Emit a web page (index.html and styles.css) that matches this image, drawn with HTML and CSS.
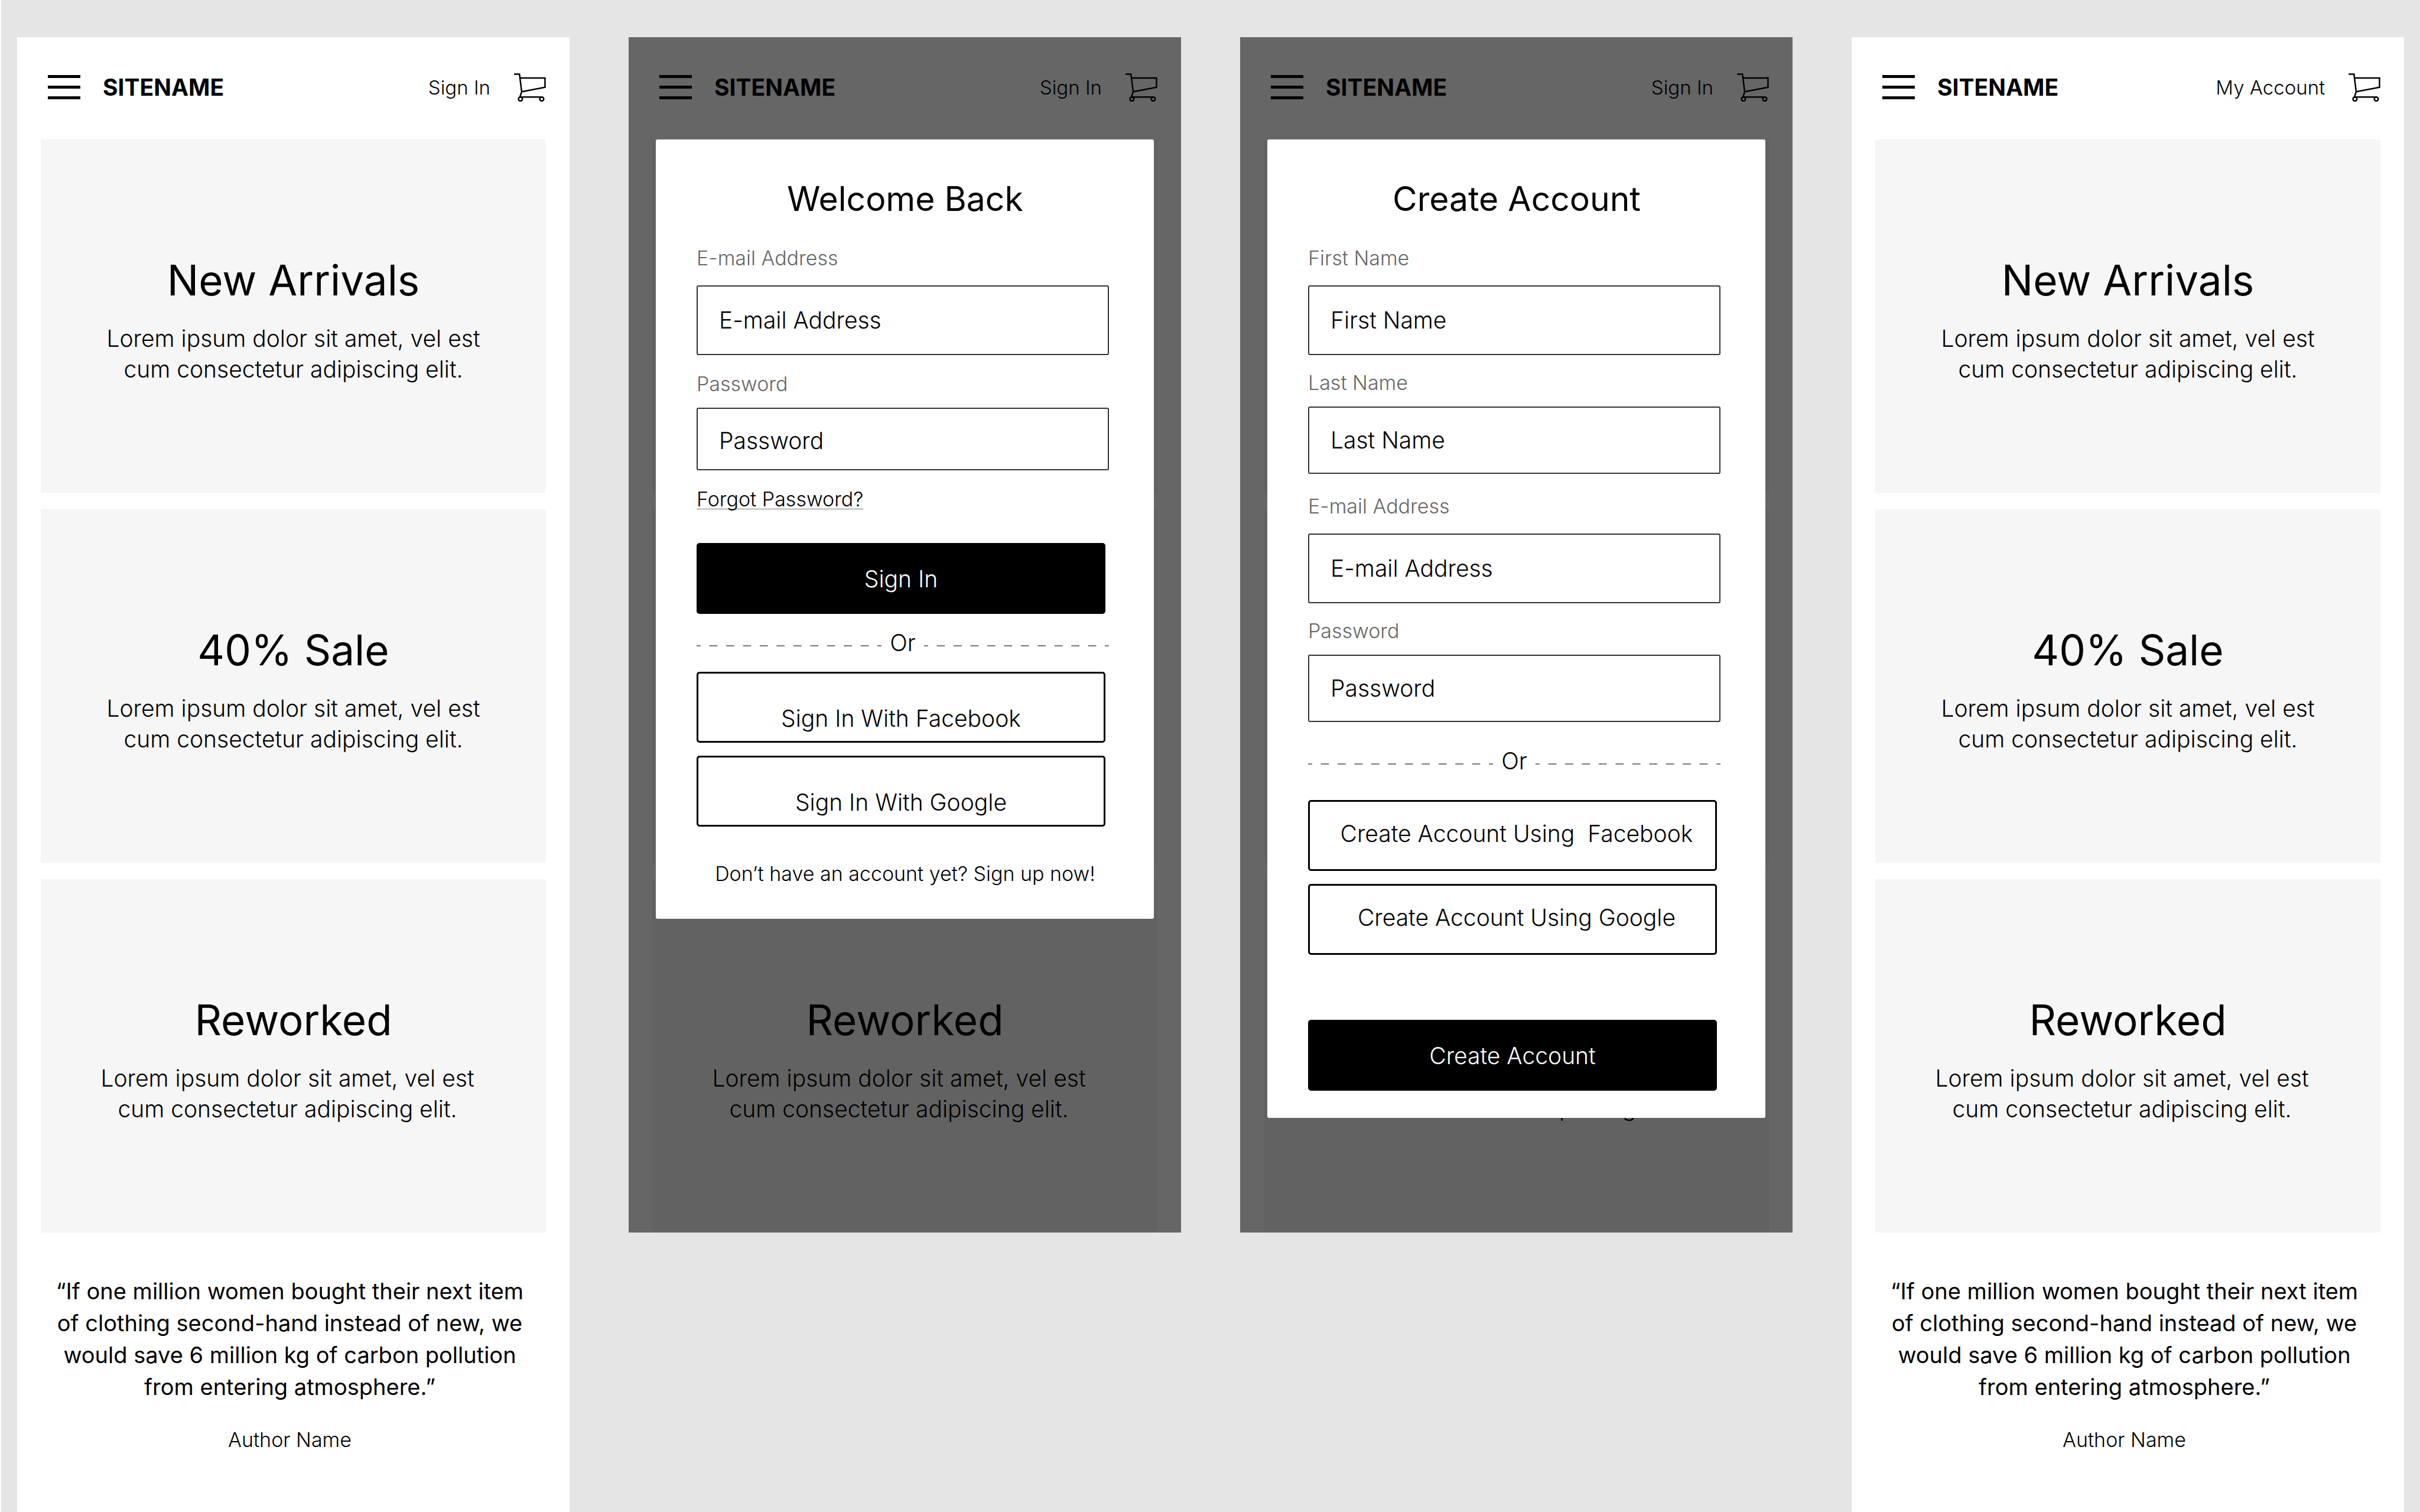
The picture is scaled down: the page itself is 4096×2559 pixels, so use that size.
FILE: index.html
```html
<!DOCTYPE html>
<html lang="en">
<head>
<meta charset="utf-8">
<title>Sitename – sign in flow</title>
<link rel="stylesheet" href="styles.css">
</head>
<body>
<svg class="sprite" aria-hidden="true">
  <symbol id="menu" viewBox="0 0 55 41">
    <path d="M0 2.5H55M0 20.5H55M0 38.5H55" stroke="#000" stroke-width="5"/>
  </symbol>
  <symbol id="cart" viewBox="0 0 56 50">
    <g fill="none" stroke="#000" stroke-width="2.6">
      <path d="M0 1.6H9.5L13.4 32.6L54.5 24.6V8.4H10.4M13.4 32.6L10.2 42H49"/>
      <circle cx="11.2" cy="45.4" r="3.5"/>
      <circle cx="48.8" cy="45.4" r="3.5"/>
    </g>
  </symbol>
</svg>
<div class="board">

  <section class="screen">
    <header class="topbar">
      <button class="icon-button" aria-label="Menu"><svg class="menu-icon"><use href="#menu"/></svg></button>
      <a class="brand" href="#">SITENAME</a>
      <a class="account" href="#">Sign In</a>
      <button class="icon-button" aria-label="Cart"><svg class="cart-icon"><use href="#cart"/></svg></button>
    </header>
    <main class="cards">
      <article class="card"><h2>New Arrivals</h2><p>Lorem ipsum dolor sit amet, vel est<br>cum consectetur adipiscing elit.</p></article>
      <article class="card"><h2>40% Sale</h2><p>Lorem ipsum dolor sit amet, vel est<br>cum consectetur adipiscing elit.</p></article>
      <article class="card card-shifted"><h2>Reworked</h2><p>Lorem ipsum dolor sit amet, vel est<br>cum consectetur adipiscing elit.</p></article>
    </main>
    <figure class="quote">
      <blockquote>“If one million women bought their next item<br>of clothing second-hand instead of new, we<br>would save 6 million kg of carbon pollution<br>from entering atmosphere.”</blockquote>
      <figcaption>Author Name</figcaption>
    </figure>
  </section>

  <section class="screen screen-short">
    <header class="topbar">
      <button class="icon-button" aria-label="Menu"><svg class="menu-icon"><use href="#menu"/></svg></button>
      <a class="brand" href="#">SITENAME</a>
      <a class="account" href="#">Sign In</a>
      <button class="icon-button" aria-label="Cart"><svg class="cart-icon"><use href="#cart"/></svg></button>
    </header>
    <main class="cards">
      <article class="card"></article>
      <article class="card"></article>
      <article class="card card-shifted"><h2>Reworked</h2><p>Lorem ipsum dolor sit amet, vel est<br>cum consectetur adipiscing elit.</p></article>
    </main>
    <div class="overlay">
      <form class="modal modal-signin">
        <h1>Welcome Back</h1>
        <div class="field">
          <label for="in-email">E-mail Address</label>
          <input id="in-email" type="email" placeholder="E-mail Address">
        </div>
        <div class="field field-tight field-low">
          <label for="in-pass">Password</label>
          <input id="in-pass" type="password" placeholder="Password">
        </div>
        <a class="forgot" href="#">Forgot Password?</a>
        <button class="button button-solid" type="submit">Sign In</button>
        <div class="divider"><span>Or</span></div>
        <div class="social">
          <button class="button" type="button">Sign In With Facebook</button>
          <button class="button" type="button">Sign In With Google</button>
        </div>
        <a class="signup" href="#">Don’t have an account yet? Sign up now!</a>
      </form>
    </div>
  </section>

  <section class="screen screen-short">
    <header class="topbar">
      <button class="icon-button" aria-label="Menu"><svg class="menu-icon"><use href="#menu"/></svg></button>
      <a class="brand" href="#">SITENAME</a>
      <a class="account" href="#">Sign In</a>
      <button class="icon-button" aria-label="Cart"><svg class="cart-icon"><use href="#cart"/></svg></button>
    </header>
    <main class="cards">
      <article class="card"></article>
      <article class="card"></article>
      <article class="card card-shifted card-covered"><p>cum consectetur adipiscing elit.</p></article>
    </main>
    <div class="overlay">
      <form class="modal modal-create">
        <h1>Create Account</h1>
        <div class="field">
          <label for="new-first">First Name</label>
          <input id="new-first" type="text" placeholder="First Name">
        </div>
        <div class="field field-tight">
          <label for="new-last">Last Name</label>
          <input id="new-last" type="text" placeholder="Last Name">
        </div>
        <div class="field field-apart">
          <label for="new-email">E-mail Address</label>
          <input id="new-email" type="email" placeholder="E-mail Address">
        </div>
        <div class="field field-tight">
          <label for="new-pass">Password</label>
          <input id="new-pass" type="password" placeholder="Password">
        </div>
        <div class="divider"><span>Or</span></div>
        <div class="social">
          <button class="button" type="button">Create Account Using&nbsp; Facebook</button>
          <button class="button" type="button">Create Account Using Google</button>
        </div>
        <button class="button button-solid" type="submit">Create Account</button>
      </form>
    </div>
  </section>

  <section class="screen">
    <header class="topbar">
      <button class="icon-button" aria-label="Menu"><svg class="menu-icon"><use href="#menu"/></svg></button>
      <a class="brand" href="#">SITENAME</a>
      <a class="account" href="#">My Account</a>
      <button class="icon-button" aria-label="Cart"><svg class="cart-icon"><use href="#cart"/></svg></button>
    </header>
    <main class="cards">
      <article class="card"><h2>New Arrivals</h2><p>Lorem ipsum dolor sit amet, vel est<br>cum consectetur adipiscing elit.</p></article>
      <article class="card"><h2>40% Sale</h2><p>Lorem ipsum dolor sit amet, vel est<br>cum consectetur adipiscing elit.</p></article>
      <article class="card card-shifted"><h2>Reworked</h2><p>Lorem ipsum dolor sit amet, vel est<br>cum consectetur adipiscing elit.</p></article>
    </main>
    <figure class="quote">
      <blockquote>“If one million women bought their next item<br>of clothing second-hand instead of new, we<br>would save 6 million kg of carbon pollution<br>from entering atmosphere.”</blockquote>
      <figcaption>Author Name</figcaption>
    </figure>
  </section>

</div>
</body>
</html>
```
FILE: styles.css
```css
* { box-sizing: border-box; }

body {
  margin: 0;
  background: #e5e5e5;
  color: #000;
  font-family: Inter, "Open Sans", sans-serif;
  font-size: 39px;
  font-weight: 300;
}

h1, h2, p, figure, blockquote { margin: 0; }
h1, h2 { font-weight: 400; }
a { color: inherit; text-decoration: none; }
button, input { font: inherit; color: inherit; }

.sprite { display: none; }

.board {
  display: flex;
  gap: 100px;
  min-height: 100vh;
  padding: 63px 27px 0;
  border-left: 2px solid #fff;
}

.screen {
  position: relative;
  flex: 1;
  min-width: 0;
  background: #fff;
}
.screen-short { align-self: flex-start; }

/* Top bar */
.topbar {
  display: flex;
  align-items: center;
  height: 169px;
  padding: 0 40px 0 52px;
}
.icon-button {
  display: flex;
  padding: 0;
  border: 0;
  background: none;
}
.menu-icon { width: 55px; height: 41px; }
.cart-icon { width: 54px; height: 48px; }
.brand {
  margin: 0 auto 0 38px;
  font-weight: 700;
}
.account {
  margin-right: 40px;
  font-size: 33px;
}

/* Promo cards */
.cards {
  display: grid;
  gap: 28px;
  padding: 4px 40px 0;
}
.card {
  min-height: 598px;
  padding-top: 198px;
  background: #f6f6f6;
  text-align: center;
}
.card h2 {
  margin-bottom: 33px;
  font-size: 71px;
  line-height: 80px;
}
.card p { line-height: 52px; }
.card-shifted p { padding-right: 20px; }
.card-covered { padding-top: 361px; }

/* Testimonial */
.quote {
  padding: 72px 12px 0 0;
  text-align: center;
}
.quote blockquote {
  font-weight: 400;
  font-size: 38px;
  line-height: 54px;
}
.quote figcaption {
  margin-top: 42px;
  font-size: 34px;
  line-height: 42px;
}

/* Dialogs */
.overlay {
  position: absolute;
  inset: 0;
  padding: 173px 46px 0;
  background: rgba(0, 0, 0, 0.6);
}
.modal {
  display: flex;
  flex-direction: column;
  padding: 67px 76px 46px 69px;
  border-radius: 3px;
  background: #fff;
}
.modal-signin { padding-bottom: 56px; }
.modal h1 {
  margin: 0 -4px 46px 4px;
  font-size: 57px;
  line-height: 68px;
  text-align: center;
}

.field {
  display: grid;
  gap: 26px;
  margin-bottom: 29px;
}
.field-tight { gap: 20px; }
.field label {
  color: #666;
  font-size: 34px;
  line-height: 40px;
}
.field input {
  width: 100%;
  height: 118px;
  padding: 0 36px 2px;
  border: 2px solid #333;
  border-radius: 3px;
  background: #fff;
  font-size: 39px;
}
.field input::placeholder { color: #000; opacity: 1; }
.field-tight input { height: 114px; }
.field-low input { height: 106px; padding-top: 6px; }

.forgot {
  align-self: flex-start;
  margin-bottom: 54px;
  font-size: 34px;
  line-height: 40px;
  text-decoration: underline 1px #777;
  text-decoration-skip-ink: none;
  text-underline-offset: 4px;
}

.button {
  height: 120px;
  margin-right: 6px;
  padding: 0;
  border: 3px solid #000;
  border-radius: 5px;
  background: #fff;
  font-size: 39px;
}
.button-solid {
  background: #000;
  color: #fff;
}

.divider {
  display: flex;
  align-items: center;
  gap: 14px;
  margin: 26px 0;
  font-size: 39px;
  line-height: 46px;
}
.divider::before,
.divider::after {
  content: "";
  flex: 1;
  height: 2px;
  margin-top: 10px;
  background: linear-gradient(90deg, #777 25%, transparent 25% 75%, #777 75%) 0 0 / 28px 2px round;
}

.social { display: grid; gap: 22px; }
.modal-signin .social .button { padding-top: 36px; }

.modal-create .field { margin-bottom: 27px; }
.modal-create .field-apart { margin-top: 8px; }
.modal-create .divider { margin: 16px 0 43px; }
.modal-create .social { margin-bottom: 110px; }
.modal-create .social .button { padding: 0 0 8px 14px; }

.signup {
  margin: 60px -4px 0 4px;
  font-size: 34px;
  line-height: 40px;
  text-align: center;
}
```
